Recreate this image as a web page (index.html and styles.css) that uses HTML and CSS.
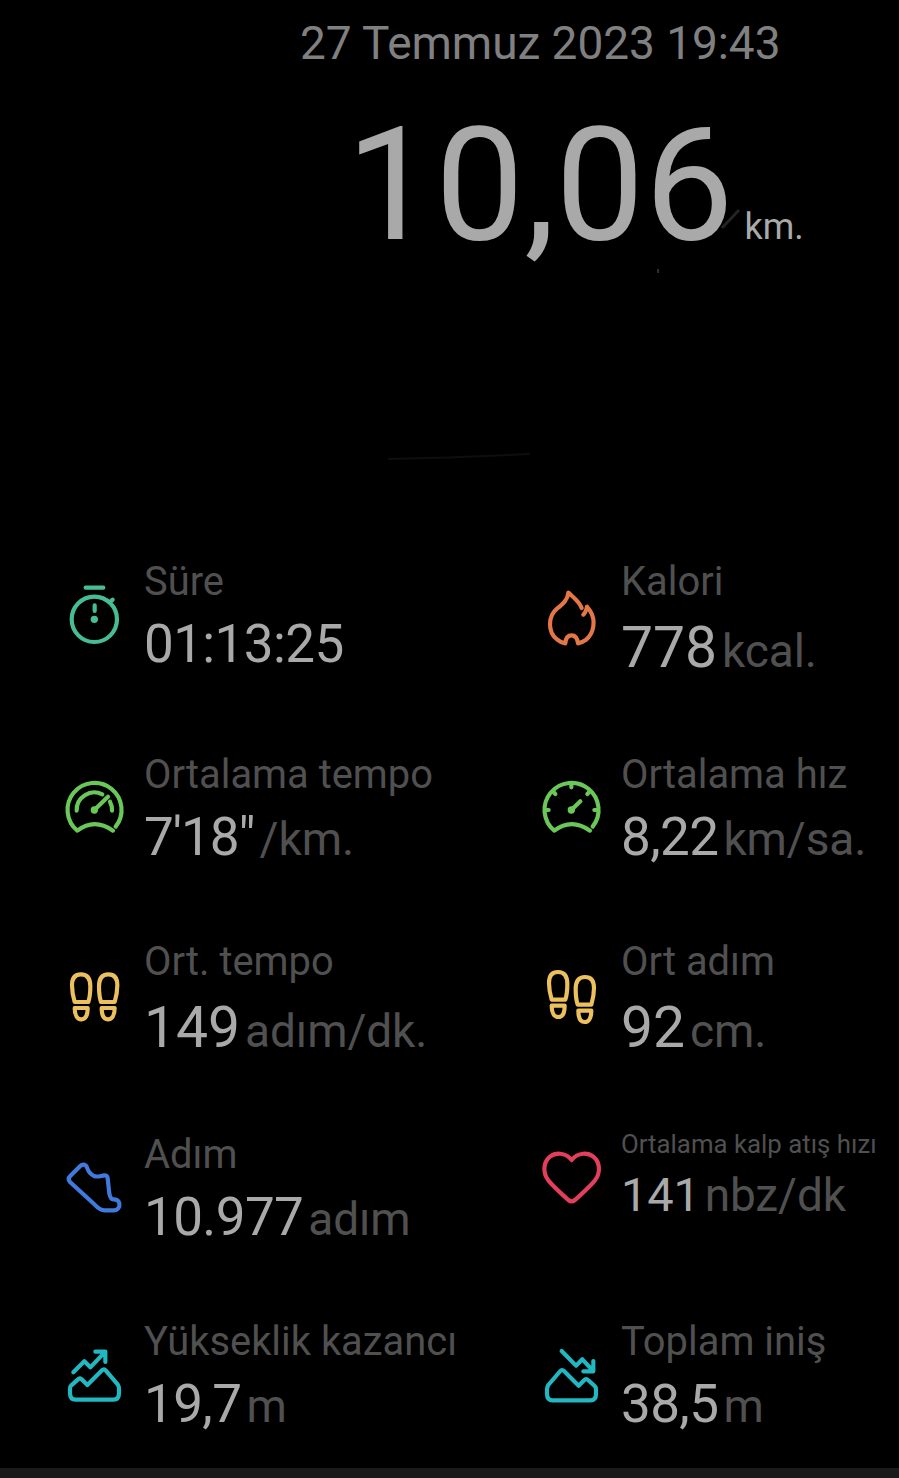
FILE: index.html
```html
<!DOCTYPE html>
<html lang="tr">
<head>
  <meta charset="UTF-8">
  <meta name="viewport" content="width=device-width, initial-scale=1.0">
  <title>10,06 km. - 27 Temmuz 2023</title>
  <link rel="stylesheet" href="styles.css">
</head>
<body>

<header class="summary">
  <p class="date">27 Temmuz 2023 19:43</p>
  <h1 class="distance">10,06<span class="distance-unit">km.</span></h1>
  <svg class="trace" viewBox="0 0 899 500" fill="none">
    <path d="M722 228L739 210" stroke="#242424" stroke-width="3"/>
    <path d="M658 269V273" stroke="#303030" stroke-width="2"/>
    <path d="M388 459C440 458 490 456 530 454" stroke="#0e0e0e" stroke-width="2"/>
  </svg>
</header>

<main class="stats">
  <section class="stat">
    <svg class="icon teal" viewBox="0 0 180 198">
      <circle cx="91" cy="124" r="68"/>
      <path d="M65 29H118M92 82V99M138 72L146 65"/>
      <circle class="dot" cx="91" cy="124" r="11"/>
    </svg>
    <div class="info">
      <p class="label">Süre</p>
      <p class="value">01:13:25</p>
    </div>
  </section>

  <section class="stat">
    <svg class="icon orange" viewBox="0 0 180 198">
      <path d="M122 90C116 72 102 62 82 44C80 66 66 78 48 92C20 115 20 163 48 184C56 191 64 195 73 196C74 180 80 172 92 172C103 172 109 180 111 196C120 195 128 190 134 186C160 166 165 126 147 98L138 86C136 96 134 104 127 110"/>
    </svg>
    <div class="info">
      <p class="label">Kalori</p>
      <p class="value big">778<span class="unit">kcal.</span></p>
    </div>
  </section>

  <section class="stat">
    <svg class="icon green" viewBox="0 0 180 198">
      <path d="M155 167A81 81 0 1 0 40 179Q91 140 147 179"/>
      <path d="M38 119A53 53 0 0 1 115 70M138 92A53 53 0 0 1 144 119M91 117L132 77"/>
      <circle class="dot" cx="91" cy="117" r="11"/>
    </svg>
    <div class="info">
      <p class="label">Ortalama tempo</p>
      <p class="value pace">7'18"<span class="unit">/km.</span></p>
    </div>
  </section>

  <section class="stat">
    <svg class="icon green" viewBox="0 0 180 198">
      <path d="M155 167A81 81 0 1 0 40 179Q91 140 147 179"/>
      <path d="M91 40V49M14 117H23M160 117H169M38 64L43 69M144 64L139 69M91 117L118 91"/>
      <circle class="dot" cx="91" cy="117" r="11"/>
    </svg>
    <div class="info">
      <p class="label">Ortalama hız</p>
      <p class="value">8,22<span class="unit">km/sa.</span></p>
    </div>
  </section>

  <section class="stat">
    <svg class="icon yellow" viewBox="0 0 180 198">
      <g id="foot">
        <path d="M32 132C27 115 24 97 24 82C24 60 33 49 51 49C69 49 79 60 79 85C79 105 77 120 73 132Z"/>
        <path d="M32 150H71C71 172 64 184 52 184C40 184 32 172 32 150Z"/>
      </g>
      <use href="#foot" transform="translate(184) scale(-1 1)"/>
    </svg>
    <div class="info">
      <p class="label">Ort. tempo</p>
      <p class="value big">149<span class="unit">adım/dk.</span></p>
    </div>
  </section>

  <section class="stat">
    <svg class="icon yellow" viewBox="0 0 180 198">
      <use href="#foot" transform="translate(0 -7)"/>
      <use href="#foot" transform="translate(183 8) scale(-1 1)"/>
    </svg>
    <div class="info">
      <p class="label">Ort adım</p>
      <p class="value big">92<span class="unit">cm.</span></p>
    </div>
  </section>

  <section class="stat">
    <svg class="icon blue" viewBox="0 0 180 198">
      <path d="M48 46L18 76Q10 84 18 93L91 160Q108 178 122 178H148C162 178 168 168 166 157C164 147 156 145 148 145C140 145 138 138 136 128L131 82Q130 72 120 73C108 75 100 79 90 75C80 70 74 64 70 52C67 40 57 37 48 46Z"/>
    </svg>
    <div class="info">
      <p class="label">Adım</p>
      <p class="value">10.977<span class="unit">adım</span></p>
    </div>
  </section>

  <section class="stat">
    <svg class="icon red" viewBox="0 0 180 198">
      <path d="M92 27C72 2 42 5 27 17C6 34 5 66 22 88C40 110 64 130 82 147Q92 155 102 147C120 130 144 110 162 88C179 66 178 34 157 17C142 5 112 2 92 27Z"/>
    </svg>
    <div class="info">
      <p class="label small">Ortalama kalp atış hızı</p>
      <p class="value small">141<span class="unit">nbz/dk</span></p>
    </div>
  </section>

  <section class="stat">
    <svg class="icon cyan" viewBox="0 0 180 198">
      <path id="hill" d="M18 152Q18 146 22 142L42 124Q47 119 53 124L70 141L114 97Q120 91 125 97L161 139Q165 145 165 152V166Q165 185 148 185H35Q18 185 18 166Z"/>
      <path d="M28 103L61 70L79 88L122 43M94 41H124V72"/>
    </svg>
    <div class="info">
      <p class="label">Yükseklik kazancı</p>
      <p class="value">19,7<span class="unit">m</span></p>
    </div>
  </section>

  <section class="stat">
    <svg class="icon cyan" viewBox="0 0 180 198">
      <use href="#hill" transform="translate(183 2) scale(-1 1)"/>
      <path d="M62 39L105 83L124 64L157 99M127 100H157V69"/>
    </svg>
    <div class="info">
      <p class="label">Toplam iniş</p>
      <p class="value">38,5<span class="unit">m</span></p>
    </div>
  </section>
</main>

<footer class="bottom-bar"></footer>

</body>
</html>
```
FILE: styles.css
```css
* {
  box-sizing: border-box;
}
body {
  margin: 0;
  height: 1478px;
  display: flex;
  flex-direction: column;
  overflow: hidden;
  background-color: #000;
  color: #a9a9a9;
  font-family: Roboto, sans-serif;
}
p, h1 {
  margin: 0;
  font-weight: normal;
  white-space: nowrap;
}
.summary {
  position: relative;
  height: 558px;
  padding-top: 16px;
}
.date {
  padding-left: 300px;
  color: #808080;
  font-size: 46px;
  line-height: 54px;
  letter-spacing: -0.05px;
}
.distance {
  display: flex;
  align-items: baseline;
  gap: 11px;
  margin-top: 20px;
  padding-left: 346px;
  font-size: 158.5px;
  line-height: 190px;
}
.distance-unit {
  font-size: 36px;
}
.trace {
  position: absolute;
  top: 0;
  left: 0;
  width: 899px;
  height: 500px;
}
.stats {
  display: grid;
  grid-template-columns: 477px 1fr;
  grid-template-rows: 193px 187px 193px 187px 150px;
  padding-left: 64px;
}
.stat {
  display: flex;
  align-items: flex-start;
  gap: 20px;
}
.icon {
  flex: none;
  width: 60px;
  height: 66px;
  margin-top: 20px;
  overflow: visible;
  fill: none;
  stroke: currentColor;
  stroke-width: 12.5;
  stroke-linecap: round;
  stroke-linejoin: round;
}
.icon .dot {
  fill: currentColor;
  stroke: none;
}
.teal { color: #46bd95; }
.orange { color: #e57648; }
.green { color: #69c858; }
.yellow { color: #edc05e; }
.blue { color: #4179dc; }
.red { color: #e33e5c; }
.cyan { color: #22b8c1; }
.label {
  color: #505050;
  font-size: 39.9px;
  line-height: 48px;
}
.value {
  display: flex;
  align-items: baseline;
  gap: 5px;
  margin-top: 6px;
  font-size: 53px;
  line-height: 64px;
  letter-spacing: -0.6px;
}
.value.pace {
  letter-spacing: -1px;
}
.value.big {
  margin-top: 10px;
  font-size: 57px;
  letter-spacing: 0;
}
.unit {
  color: #505050;
  font-size: 46px;
  letter-spacing: -0.1px;
}
.label.small {
  font-size: 25.8px;
  line-height: 27px;
}
.value.small {
  margin-top: 5px;
  font-size: 47px;
  letter-spacing: -0.2px;
}
.bottom-bar {
  height: 10px;
  margin-top: auto;
  background-color: #1a1a1a;
}
```
